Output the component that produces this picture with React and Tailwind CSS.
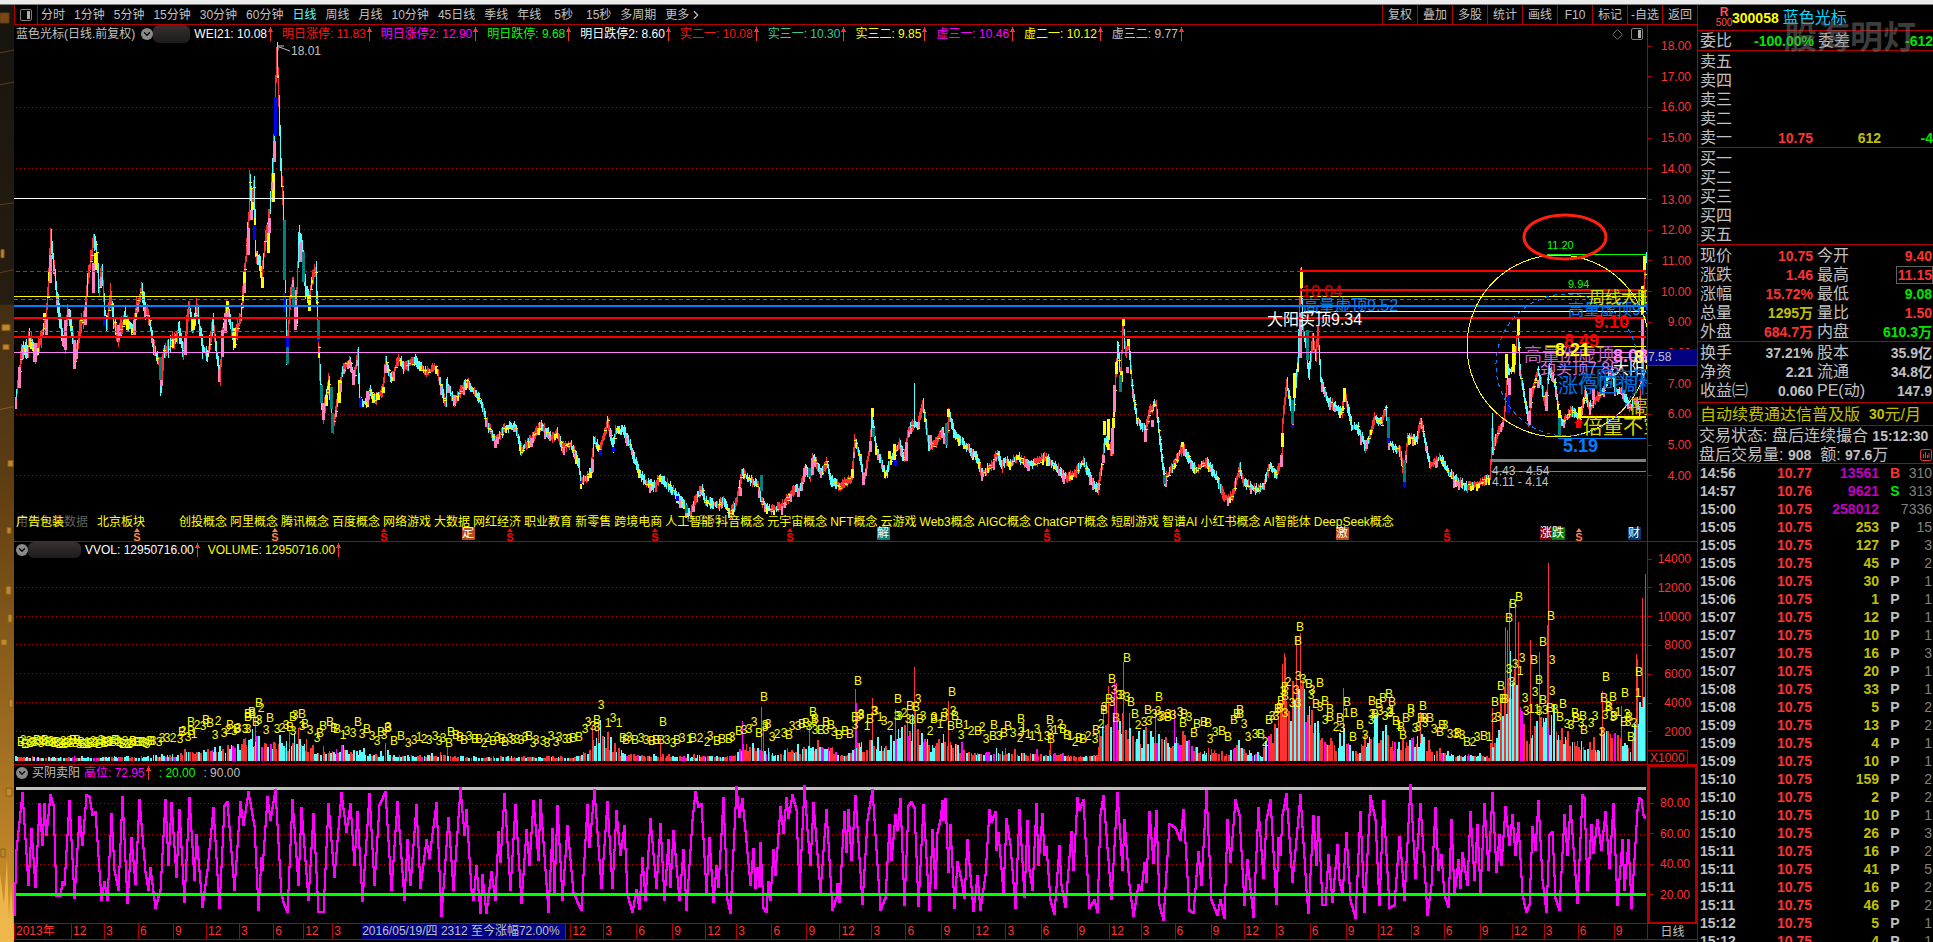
import React from 'react';
import { ChevronDown, ChevronRight, Diamond } from 'lucide-react';

const RED = '#ff3232';
const CYAN = '#54ffff';
const YELLOW = '#ffff00';
const PINK = '#ff80c0';
const TEAL = '#008080';
const NAVY = '#0000ff';

const periods = ['分时', '1分钟', '5分钟', '15分钟', '30分钟', '60分钟', '日线', '周线', '月线', '10分钟', '45日线', '季线', '年线', '5秒', '15秒', '多周期'];
const tools = ['复权', '叠加', '多股', '统计', '画线', 'F10', '标记', '-自选', '返回'];

const indicators = [
  ['WEI21: 10.08', 'text-white'],
  ['明日涨停: 11.83', 'text-[#ff1414]'],
  ['明日涨停2: 12.90', 'text-[#ff00ff]'],
  ['明日跌停: 9.68', 'text-[#00ff00]'],
  ['明日跌停2: 8.60', 'text-white'],
  ['实二一: 10.08', 'text-[#ff1414]'],
  ['实三一: 10.30', 'text-[#33cc99]'],
  ['实三二: 9.85', 'text-[#ffff00]'],
  ['虚三一: 10.46', 'text-[#ff00ff]'],
  ['虚二一: 10.12', 'text-[#ffff00]'],
  ['虚三二: 9.77', 'text-[#c0c0c0]'],
];

const concepts = '创投概念 阿里概念 腾讯概念 百度概念 网络游戏 大数据 网红经济 职业教育 新零售 跨境电商 人工智能 抖音概念 元宇宙概念 NFT概念 云游戏 Web3概念 AIGC概念 ChatGPT概念 短剧游戏 智谱AI 小红书概念 AI智能体 DeepSeek概念'.split(' ');

// month label + width of its slot on the time axis
const months = [
  ['2013年', 57], ['12', 33], ['3', 34], ['6', 35], ['9', 33], ['12', 33], ['3', 34], ['6', 30], ['12', 29], ['3', 30],
  ['cursor', 203], ['', 5], ['12', 33], ['3', 33], ['6', 36], ['9', 33], ['12', 31], ['3', 35], ['6', 35], ['9', 33],
  ['12', 32], ['3', 34], ['6', 36], ['9', 32], ['12', 32], ['3', 35], ['6', 36], ['9', 32], ['12', 32], ['3', 34],
  ['6', 36], ['9', 33], ['12', 32], ['3', 34], ['6', 36], ['9', 32], ['12', 33], ['3', 33], ['6', 36], ['9', 32],
  ['12', 32], ['3', 34], ['6', 36], ['9', 33],
];
const monthsTotal = months.reduce((sum, m) => sum + m[1], 0);

// price path, x then y
const price = [
  16,397,19,377,22,347,28,350,29,335,35,355,40,343,46,320,48,293,50,253,51,235,54,265,57,295,60,320,65,347,68,310,71,323,75,363,80,327,85,313,
  88,280,94,238,97,253,99,290,102,270,105,313,107,323,111,293,114,323,118,337,125,317,133,330,137,307,142,290,145,307,150,323,154,347,160,367,161,387,164,352,
  170,347,179,330,184,352,189,307,193,327,197,307,203,350,208,353,213,323,220,377,223,330,227,303,234,343,241,317,245,273,249,217,250,178,252,205,254,183,
  256,253,259,260,262,277,266,233,270,213,273,167,275,110,277,50,279,100,281,167,283,200,285,260,287,355,290,305,293,280,296,322,299,233,302,247,306,290,
  309,303,312,280,316,270,318,330,320,373,323,417,329,380,333,430,337,403,343,370,350,360,354,380,358,353,360,403,367,403,370,390,375,400,383,390,386,360,
  391,380,399,358,404,368,415,360,426,373,436,367,446,405,447,383,454,402,467,382,481,402,487,423,496,442,505,427,516,427,521,450,531,440,541,425,552,438,
  557,433,562,447,571,445,579,462,581,482,591,473,594,440,600,450,608,422,613,447,616,430,624,430,632,450,638,470,646,483,656,487,659,477,670,487,679,498,
  687,510,690,515,695,500,702,488,705,500,718,506,724,500,730,515,737,500,742,473,750,480,758,485,761,500,771,511,783,505,796,487,799,493,806,468,810,477,
  813,457,822,473,827,462,831,480,840,487,852,477,855,440,861,460,864,480,870,447,872,415,876,447,886,475,891,460,900,443,904,460,908,433,914,423,918,427,
  923,403,929,447,936,443,942,430,947,443,949,412,954,433,963,443,977,457,982,473,991,467,998,453,1002,467,1005,460,1011,463,1018,457,1026,463,1034,463,1046,457,
  1057,468,1067,478,1076,473,1083,462,1092,480,1098,490,1102,465,1105,440,1108,443,1112,453,1115,390,1118,347,1121,380,1123,323,1126,353,1129,343,1132,383,1137,420,
  1146,430,1150,410,1156,403,1160,440,1165,480,1175,463,1183,447,1195,470,1207,462,1218,480,1224,498,1232,497,1240,468,1243,482,1255,490,1264,485,1270,465,1277,475,
  1282,457,1283,420,1287,383,1293,420,1295,393,1298,363,1301,273,1303,327,1307,353,1309,377,1313,337,1316,357,1318,330,1321,380,1328,400,1342,413,1345,393,1352,427,
  1358,428,1366,448,1375,417,1382,423,1386,407,1389,443,1400,452,1404,473,1408,437,1417,440,1421,420,1430,465,1440,458,1453,478,1467,487,1480,483,1490,477,1492,450,
  1498,433,1504,420,1508,370,1514,370,1518,325,1520,370,1525,400,1529,423,1532,393,1538,370,1542,387,1546,407,1549,367,1555,383,1560,420,1563,423,1572,410,1580,420,
  1585,393,1590,407,1603,390,1612,370,1615,390,1623,393,1630,407,1637,400,1640,413,1642,353,1644,290,1646,257,
];

// wide candle bodies: x, top, bottom
const bodies = {
  [PINK]: [50,255,283,93,263,293,244,283,293,248,228,255,251,210,220,269,218,233,274,141,162,300,245,262,19,367,388,35,343,362,46,318,335,65,320,350,74,340,369,85,310,325,118,325,340,134,320,335,161,380,386,185,337,355,222,330,357,225,313,333,295,290,330,323,403,420,340,383,392,353,370,385,367,391,402,385,365,373,448,386,393,454,395,403,497,437,444,531,438,447,592,459,472,610,430,437,693,506,512,740,488,496,804,468,476,812,458,475,798,488,497,870,441,452,863,473,485,906,442,461,930,435,445,1026,459,467,1103,455,463,1112,428,454,1114,385,412,1127,367,373,1145,430,442,1152,420,427,1098,483,490,1300,313,358,1281,455,467,1404,463,470,1366,440,449,1509,378,395,1529,411,425,1530,388,408,1546,392,411,1538,380,388,1593,388,400,1642,319,360],
  [YELLOW]: [95,253,270,244,272,283,252,202,210,262,277,288,268,233,253,273,173,202,44,313,320,127,317,330,193,317,330,227,301,318,234,328,348,296,305,324,309,295,311,326,395,406,339,380,403,367,402,407,377,393,400,383,387,393,852,469,478,872,408,417,889,451,459,894,444,460,948,409,417,1017,455,460,1104,421,435,1108,419,440,1113,418,428,1116,362,374,1123,319,326,1121,371,382,1128,339,346,1182,442,447,1301,272,288,1294,373,398,1282,433,447,1344,388,402,1506,354,378,1513,344,372,1518,319,335,1559,410,418,1579,407,418,1642,286,315,1644,256,270],
  [TEAL]: [284,220,280,303,252,282,293,287,305,160,357,380,287,346,364,318,320,341,321,385,403,331,387,409,332,413,433,686,505,513,761,475,491,809,468,477,873,428,437,946,423,445,1120,375,392,1164,475,484,1307,330,360,1292,400,424,1388,417,438,1404,460,482,1492,428,441,1559,418,437],
  [NAVY]: [254,225,240,275,97,136,284,293,312,104,316,326,287,338,347,318,339,342,360,398,407,580,481,484,600,450,455,613,447,452,677,496,501,895,460,466,1292,425,428,1388,438,443,1404,482,487,1508,396,413],
};

// volume envelope: x, height
const volume = [
  14,4,150,4,180,8,190,12,215,16,240,20,248,34,252,28,258,32,265,23,290,23,300,26,310,14,330,12,340,14,360,12,372,6,385,10,400,6,440,7,460,4,575,4,592,18,598,40,605,28,612,18,620,9,650,5,735,6,
  742,22,750,16,765,12,775,8,790,16,800,14,810,24,820,16,830,22,836,8,850,10,858,26,864,16,872,30,880,16,895,26,905,32,914,45,922,32,932,18,945,34,955,22,965,12,980,8,1000,12,1020,9,1045,10,1080,6,1095,7,
  1103,48,1114,66,1124,60,1130,38,1140,24,1150,36,1170,28,1182,36,1190,20,1200,12,1228,7,1237,30,1245,10,1262,6,1268,40,1275,32,1283,90,1290,62,1298,100,1302,96,1308,66,1317,60,1325,34,1335,20,1344,30,1350,16,
  1360,12,1370,40,1385,42,1395,14,1412,28,1420,32,1430,15,1445,8,1488,6,1495,40,1506,110,1510,130,1520,84,1526,36,1540,52,1550,60,1560,30,1575,22,1590,24,1598,16,1606,52,1616,38,1630,12,1637,75,1641,70,1645,110,
];
const spikes = [
  255,45,289,30,298,33,447,15,385,18,592,35,598,40,660,24,742,40,761,54,763,38,809,38,855,72,856,58,872,63,895,52,907,55,914,94,915,52,948,60,1050,28,1103,54,1108,75,1114,82,1116,78,1123,99,1129,48,1155,52,1174,52,
  1282,97,1284,108,1285,104,1296,124,1300,128,1343,73,1420,49,1492,53,1505,134,1507,131,1509,160,1515,158,1518,139,1530,121,1539,109,1548,198,1547,136,1602,70,1621,55,1636,107,1637,102,1642,163,1645,187,
];

const marksB = [
  259,703,252,712,248,717,230,725,237,729,293,717,302,714,182,732,191,731,388,728,451,732,597,720,663,722,320,733,764,697,806,723,813,712,815,719,826,722,858,681,855,717,870,719,898,699,910,706,934,719,944,717,952,692,959,724,
  994,725,1021,719,1050,720,1112,679,1104,710,1116,718,1127,658,1135,714,1148,710,1159,697,1168,717,1184,714,1208,723,1096,730,1237,714,1240,714,1269,720,1278,709,1281,701,1285,687,1285,696,1298,641,1300,627,1320,683,1330,717,
  1340,718,1347,702,1354,713,1372,701,1379,704,1383,698,1389,694,1392,702,1401,727,1411,709,1423,706,1442,725,1458,733,1495,702,1501,686,1505,699,1509,618,1513,604,1519,597,1534,660,1539,680,1543,642,1551,616,1563,704,1575,713,
  1583,716,1604,698,1606,677,1613,697,1625,693,1629,717,1639,672,
];
const marks3 = [
  259,720,293,731,248,729,765,727,815,730,861,714,875,711,899,716,918,699,953,711,1021,732,1050,730,1112,702,1160,717,1298,676,1298,703,1311,695,1285,713,1325,720,1372,714,1390,713,1425,723,1522,658,1512,682,1535,692,1552,691,1539,711,1545,710,1526,711,
  1608,706,1613,717,1627,714,1552,660,
];

// oscillator turning points
const osc = [
  14,916,16,850,22,793,28,885,31,829,35,887,39,804,42,845,44,804,46,835,50,795,53,805,56,896,60,896,62,882,64,885,69,801,74,898,79,817,82,845,86,795,89,797,92,815,95,812,101,900,104,882,107,900,111,814,114,870,118,890,122,797,127,903,
  131,838,135,884,139,800,145,872,148,890,150,868,155,908,160,890,165,800,168,865,171,803,176,877,179,810,184,902,189,798,194,880,196,835,202,907,207,870,213,808,219,908,224,806,227,802,234,890,240,802,243,825,248,792,254,826,258,910,
  261,858,262,870,267,797,270,820,275,790,281,895,284,905,287,912,292,800,298,885,301,808,308,900,313,814,318,912,323,912,328,804,334,877,341,793,346,832,350,804,354,865,357,812,362,901,369,794,374,885,379,805,385,792,391,890,397,802,
  404,900,407,840,410,885,416,805,420,888,426,840,429,858,436,803,441,916,448,818,453,890,460,788,464,835,466,810,471,890,473,900,476,866,480,913,482,875,486,913,491,872,495,900,498,832,500,862,504,794,510,890,515,805,521,903,526,830,
  529,865,533,801,538,860,540,800,548,912,552,829,554,892,557,806,562,900,567,826,573,893,581,910,587,805,589,847,594,790,601,888,607,802,612,888,616,811,620,855,624,826,627,895,632,912,636,890,639,909,642,858,645,900,650,819,656,888,
  660,824,664,900,668,840,670,887,673,831,679,900,683,850,686,910,692,820,695,792,698,807,701,804,706,892,709,838,713,902,716,866,718,887,723,798,727,900,730,913,736,787,739,817,742,799,750,885,753,849,755,888,757,868,759,886,760,843,
  763,908,766,912,768,882,770,900,773,850,775,875,780,807,783,833,786,798,788,818,792,795,796,810,799,893,804,786,807,830,810,865,813,803,820,892,826,810,832,910,836,898,837,884,839,902,844,812,846,852,848,810,851,860,855,796,862,904,
  867,820,872,790,880,910,885,898,889,825,891,860,895,815,897,830,900,799,904,905,908,806,911,802,914,808,918,906,923,805,929,910,932,830,935,888,937,833,940,820,942,801,943,820,945,799,948,872,950,825,954,908,957,862,961,880,964,898,
  967,840,973,911,977,876,980,910,985,875,989,810,991,822,995,812,996,850,998,833,1003,893,1006,819,1010,845,1015,908,1019,810,1024,897,1027,821,1029,870,1032,890,1036,804,1038,865,1042,814,1044,855,1046,847,1050,900,1054,914,1059,846,
  1061,885,1065,907,1071,832,1073,870,1077,798,1079,810,1083,800,1087,875,1089,908,1094,900,1097,912,1100,815,1103,796,1111,899,1117,793,1122,870,1124,820,1129,885,1133,916,1138,885,1141,890,1144,863,1146,882,1149,812,1153,863,1156,811,
  1159,905,1163,920,1169,824,1175,828,1180,840,1183,810,1189,910,1193,913,1198,852,1201,885,1206,791,1211,900,1217,915,1220,900,1224,918,1227,820,1230,862,1235,800,1239,815,1244,905,1247,860,1253,917,1258,808,1263,878,1266,820,1270,800,
  1276,904,1278,838,1280,855,1282,815,1286,794,1292,882,1295,850,1300,795,1306,890,1308,913,1313,816,1316,865,1318,817,1322,905,1325,905,1328,855,1332,902,1337,845,1339,880,1342,895,1346,833,1350,900,1355,918,1360,812,1364,912,1370,796,
  1375,820,1379,905,1383,801,1389,908,1394,905,1399,837,1401,858,1404,900,1410,785,1415,878,1420,804,1427,915,1431,885,1435,808,1438,870,1441,855,1444,895,1448,907,1451,820,1454,895,1458,860,1460,888,1462,853,1467,885,1470,812,1474,880,
  1477,825,1480,893,1484,804,1488,870,1492,793,1496,872,1499,835,1501,865,1505,807,1509,845,1512,815,1515,855,1518,823,1522,895,1526,912,1529,905,1532,827,1535,850,1538,801,1542,880,1546,912,1549,835,1552,832,1555,898,1559,910,1564,815,
  1567,855,1570,806,1577,903,1582,795,1584,798,1587,890,1591,825,1593,853,1597,820,1601,850,1605,812,1609,868,1613,804,1617,905,1622,840,1624,890,1628,840,1631,908,1637,810,1639,798,1641,800,1643,815,1646,820,
];

const ticks = [
  ['14:56', '10.77', '13561', 'B', '310'], ['14:57', '10.76', '9621', 'S', '313'], ['15:00', '10.75', '258012', '', '7336'],
  ['15:05', '10.75', '253', 'P', '15'], ['15:05', '10.75', '127', 'P', '3'], ['15:05', '10.75', '45', 'P', '2'],
  ['15:06', '10.75', '30', 'P', '1'], ['15:06', '10.75', '1', 'P', '1'], ['15:07', '10.75', '12', 'P', '1'],
  ['15:07', '10.75', '10', 'P', '1'], ['15:07', '10.75', '16', 'P', '3'], ['15:07', '10.75', '20', 'P', '1'],
  ['15:08', '10.75', '33', 'P', '1'], ['15:08', '10.75', '5', 'P', '2'], ['15:09', '10.75', '13', 'P', '2'],
  ['15:09', '10.75', '4', 'P', '1'], ['15:09', '10.75', '10', 'P', '1'], ['15:10', '10.75', '159', 'P', '2'],
  ['15:10', '10.75', '2', 'P', '2'], ['15:10', '10.75', '10', 'P', '1'], ['15:10', '10.75', '26', 'P', '3'],
  ['15:11', '10.75', '16', 'P', '2'], ['15:11', '10.75', '41', 'P', '5'], ['15:11', '10.75', '16', 'P', '2'],
  ['15:11', '10.75', '46', 'P', '2'], ['15:12', '10.75', '5', 'P', '1'], ['15:12', '10.75', '4', 'P', '1'],
];

const R = 'text-[#ff3232]';
const G = 'text-[#00e600]';
const Y = 'text-[#c0c000]';
const W = 'text-[#c0c0c0]';
const quotes = [
  ['现价', '10.75', R, '今开', '9.40', R],
  ['涨跌', '1.46', R, '最高', '11.15', R, true],
  ['涨幅', '15.72%', R, '最低', '9.08', G],
  ['总量', '1295万', Y, '量比', '1.50', R],
  ['外盘', '684.7万', R, '内盘', '610.3万', G],
];
const basics = [
  ['换手', '37.21%', W, '股本', '35.9亿', W],
  ['净资', '2.21', W, '流通', '34.8亿', W],
  ['收益㈢', '0.060', W, 'PE(动)', '147.9', W],
];

function makeRandom(seed) {
  let s = seed;
  return () => {
    s = (s * 16807) % 2147483647;
    return s / 2147483647;
  };
}

function at(path, x) {
  let i = 0;
  while (i < path.length - 4 && path[i + 2] < x) i += 2;
  const t = (x - path[i]) / (path[i + 2] - path[i] || 1);
  return path[i + 1] + (path[i + 3] - path[i + 1]) * Math.min(1, Math.max(0, t));
}

function pairs(list) {
  const out = [];
  for (let i = 0; i < list.length; i += 2) out.push([list[i], list[i + 1]]);
  return out;
}

function buildCandles() {
  const rnd = makeRandom(77);
  const d = { [RED]: '', [CYAN]: '', [YELLOW]: '', [PINK]: '' };
  for (let x = 16; x < 1647; x++) {
    const a = at(price, x);
    const b = at(price, x + 1);
    const amp = x < 330 ? 9 : 5;
    const top = Math.round(Math.min(a, b) - rnd() * amp - 1);
    const bottom = Math.round(Math.max(a, b) + rnd() * amp + 1);
    const up = rnd() < 0.2 ? b > a : b < a;
    d[up ? RED : CYAN] += `M${x} ${top}h1V${bottom}h-1z`;
    if (rnd() < 0.3) d[YELLOW] += `M${x - 1} ${Math.round(a + (rnd() - 0.5) * amp)}h3v1h-3z`;
    if (rnd() < 0.08) d[PINK] += `M${x - 1} ${Math.round(a)}h2v${4 + Math.round(rnd() * amp)}h-2z`;
    if (rnd() < 0.06) d[YELLOW] += `M${x - 1} ${Math.round(a)}h2v${3 + Math.round(rnd() * 5)}h-2z`;
  }
  Object.keys(bodies).forEach((color) => {
    const list = bodies[color];
    d[color] = d[color] || '';
    for (let i = 0; i < list.length; i += 3) d[color] += `M${list[i] - 1} ${list[i + 1]}h3V${list[i + 2]}h-3z`;
  });
  return d;
}

function buildVolume() {
  const rnd = makeRandom(4242);
  const d = { [RED]: '', '#ff00ff': '', [CYAN]: '' };
  let x = 15;
  while (x < 1645) {
    const h = Math.round(at(volume, x) * (rnd() < 0.12 ? 1.1 : 0.4 + rnd() * 0.45)) + 1;
    const k = rnd();
    const color = k < 0.44 ? RED : k < 0.52 ? '#ff00ff' : CYAN;
    const w = rnd() < 0.65 ? 2 : 1;
    d[color] += `M${x} ${761 - h}h${w}V761h-${w}z`;
    x += w + (rnd() < 0.2 ? 1 : 0);
  }
  pairs(spikes).forEach(([sx, h], i) => {
    d[i % 5 === 3 && h < 100 ? '#ff00ff' : RED] += `M${sx} ${761 - h}h1V761h-1z`;
  });
  return d;
}

function buildMarks() {
  const rnd = makeRandom(909);
  const out = [];
  let x = 18;
  while (x < 1640) {
    const k = rnd();
    const h = at(volume, x);
    const lift = x < 150 ? 4 : h > 7 ? 18 : 9;
    const y = 761 - Math.min(h * 0.65, 80) - 14 - Math.round(rnd() * lift);
    out.push([x + 3, Math.round(y), k < 0.34 ? 'B' : k < 0.8 ? '3' : k < 0.9 ? '2' : '1']);
    x += x < 150 ? 2 : 3 + Math.round(rnd() * 4);
  }
  pairs(marksB).forEach(([mx, y]) => out.push([mx, y, 'B']));
  pairs(marks3).forEach(([mx, y]) => out.push([mx, y, '3']));
  return out;
}

// one step per pixel column keeps the staircase look of the line
function buildOsc() {
  let d = `M15 ${osc[1]}`;
  for (let x = 15; x < 1646; x++) d += `V${Math.round(at(osc, x))}H${x + 1}`;
  return d;
}

const candles = buildCandles();
const bars = buildVolume();
const marks = buildMarks();
const oscPath = buildOsc();

function Grid({ rows }) {
  return rows.map((y) => <line key={y} x1="16" x2="1646" y1={y} y2={y} stroke="#b00000" strokeDasharray="1 3" />);
}

function UpArrow() {
  return (
    <svg className="ml-px h-[14px] w-[5px] shrink-0" viewBox="0 0 5 14" fill={RED} aria-hidden="true">
      <path d="M2 0h1v2h1v2h1v1H3v9H2V5H0V4h1V2h1z" shapeRendering="crispEdges" />
    </svg>
  );
}

function FoldButton({ label }) {
  return (
    <button aria-label={label} className="flex h-3 w-3 shrink-0 items-center justify-center rounded-full bg-[#8a8a8a] text-black">
      <ChevronDown size={10} strokeWidth={3} />
    </button>
  );
}

function PanelIcon() {
  return (
    <svg className="h-3 w-3" viewBox="0 0 12 12" aria-hidden="true">
      <rect x="0.5" y="0.5" width="11" height="11" rx="1.5" fill="none" stroke="#808080" />
      <rect x="7" y="2" width="3" height="8" fill="#b0b0b0" />
    </svg>
  );
}

function Toolbar() {
  return (
    <nav className="flex h-5 items-stretch border-b border-[#b40000] text-[#c0c0c0]">
      <button aria-label="侧栏" className="flex w-6 items-center justify-center border-r border-l border-[#b40000]">
        <PanelIcon />
      </button>
      <div className="ml-[3px] flex items-center gap-[9px]">
        {periods.map((p) => (
          <button key={p} className={p === '日线' ? 'text-[#54ffff]' : p === '5秒' || p === '15秒' ? 'pl-1' : ''}>{p}</button>
        ))}
        <button className="flex items-center">更多<ChevronRight size={14} /></button>
      </div>
      <div className="ml-auto flex">
        {tools.map((t) => (
          <button key={t} className="w-[35px] border-l border-[#b40000] text-center">{t}</button>
        ))}
      </div>
    </nav>
  );
}

function Label({ x, y, size = 16, fill, bold, children }) {
  return (
    <text x={x} y={y} fontSize={size} fill={fill} fontWeight={bold ? 700 : 400} dominantBaseline="central">{children}</text>
  );
}

function Dividend({ x, color }) {
  return (
    <g fill={color}>
      <path d={`M${x - 3} 532l3 -4l3 4z`} />
      <text x={x} y="537" fontSize="11" fontWeight="700" textAnchor="middle" dominantBaseline="central">S</text>
    </g>
  );
}

function Badge({ x, bg, children }) {
  return (
    <g>
      <rect x={x} y="527" width="13" height="13" fill={bg} />
      <text x={x + 6} y="533" fontSize="12" fill="#fff" textAnchor="middle" dominantBaseline="central">{children}</text>
    </g>
  );
}

function PriceChart() {
  return (
    <section className="relative flex h-[517px] flex-col justify-between overflow-hidden border-b border-[#b40000]">
      <svg className="absolute inset-0 h-full w-full" viewBox="14 25 1633 516" preserveAspectRatio="none" aria-label="K线图">
        <g shapeRendering="crispEdges">
          <Grid rows={[107.5, 168.5, 229.5, 291.5, 414.5, 475.5]} />
          {Object.keys(candles).map((c) => <path key={c} d={candles[c]} fill={c} />)}
          <path d="M914.5 383v40M1492.5 413v40" stroke={CYAN} />
          <path d="M14 198.5H1646" stroke="#fff" />
          <path d="M16 271.5H1300" stroke="#c800c8" strokeDasharray="4 3" />
          <path d="M14 296.5H1646" stroke="#ffff00" />
          <path d="M14 299.5H1646M14 331.5H1646" stroke="#0080ff" strokeDasharray="4 3" />
          <path d="M14 306H1646" stroke="#0080ff" strokeWidth="2" />
          <path d="M14 318H1646M14 337H1646M1300 271H1646M1300 290H1646" stroke="#f00" strokeWidth="2" />
          <path d="M14 352.5H1646M1600 357.5H1646" stroke="#ff80ff" />
          <path d="M1304 311.5H1646" stroke="#fff" />
          <path d="M1547 254.5H1646M1568 293.5H1646" stroke="#0f0" />
          <path d="M1546 346.5H1646" stroke="#ff0" />
          <path d="M1580 417H1646" stroke="#ff0" strokeWidth="2" />
          <path d="M1557 366.5H1612M1558 438.5H1646" stroke="#0080ff" />
          <path d="M1491 460.5H1646" stroke="#808080" strokeWidth="3" />
          <path d="M1491 471.5H1646" stroke="#808080" />
          <circle cx="1558" cy="346" r="91" fill="none" stroke="#ff0" />
          <circle cx="1567" cy="365" r="71" fill="none" stroke="#0080ff" strokeDasharray="4 4" />
        </g>
        <ellipse cx="1565" cy="237" rx="41" ry="22" fill="none" stroke="#ff2010" strokeWidth="3" />
        <path d="M1579 418l4 5h-2v5h-5v-5h-2z" fill="#f00" />
        <path d="M278 46h6M278 46v5M279 47l11 4" stroke="#c0c0c0" fill="none" />
        <Label x={291} y={51} size={12} fill="#c0c0c0">18.01</Label>
        <Label x={1547} y={245} size={11} fill="#0f0">11.20</Label>
        <Label x={1568} y={284} size={11} fill="#0f0">9.94</Label>
        <Label x={1302} y={291} fill="#e00000">10.04</Label>
        <Label x={1303} y={305} fill="#0080ff">高量虚顶9.52</Label>
        <Label x={1267} y={319} fill="#fff">大阳买顶9.34</Label>
        <Label x={1568} y={309} fill="#0080ff">高量虚顶9.52</Label>
        <Label x={1589} y={297} fill="#e0e000">周线大阳</Label>
        <Label x={1524} y={355} size={18} fill="#c860c8">高量阴虚顶</Label>
        <Label x={1540} y={368} fill="#d070e0">颈买顶7.85</Label>
        <Label x={1613} y={368} fill="#fff">大阳</Label>
        <Label x={1578} y={378} size={18} fill="#0060c0">大阳实顶</Label>
        <Label x={1558} y={386} size={20} fill="#0070e0">涨停回调柱</Label>
        <Label x={1594} y={322} size={18} fill="#f00" bold>9.10</Label>
        <Label x={1564} y={341} size={18} fill="#f00" bold>8.49</Label>
        <Label x={1555} y={350} size={18} fill="#ff0" bold>8.21</Label>
        <Label x={1613} y={356} size={18} fill="#ff80ff" bold>8.08</Label>
        <Label x={1634} y={357} size={18} fill="#ffff60" bold>8.2</Label>
        <Label x={1630} y={407} size={20} fill="#c0c000">高量</Label>
        <Label x={1583} y={427} size={20} fill="#d8d800">倍量不穿</Label>
        <Label x={1563} y={446} size={18} fill="#0080ff" bold>5.19</Label>
        <Label x={1492} y={471} size={12} fill="#c0c0c0">4.43 - 4.54</Label>
        <Label x={1492} y={482} size={12} fill="#c0c0c0">4.11 - 4.14</Label>
        <Label x={698} y={520} size={12} fill="#909090">2.55</Label>
        <path d="M688 517v4h9" stroke="#909090" fill="none" />
        {[137, 275, 1579].map((x) => <Dividend key={x} x={x} color="#ff8040" />)}
        {[384, 510, 655, 790, 1047, 1177, 1447].map((x) => <Dividend key={x} x={x} color="#ff0000" />)}
        <Badge x={462} bg="#b84a14">定</Badge>
        <Badge x={877} bg="#008080">解</Badge>
        <Badge x={1336} bg="#b84a14">激</Badge>
        <Badge x={1540} bg="#800000">涨</Badge>
        <Badge x={1552} bg="#008000">跌</Badge>
        <Badge x={1628} bg="#003870">财</Badge>
      </svg>
      <header className="relative flex h-[18px] items-center pl-[2px] text-[#c0c0c0]">
        <h1>蓝色光标(日线.前复权)</h1>
        <span className="ml-[6px] flex"><FoldButton label="主图指标" /></span>
        <span className="mr-1 h-[18px] w-[37px] rounded-md bg-linear-to-b from-[#3a2e2e] to-[#1c1c1c]" />
        <div className="flex gap-[9px]">
          {indicators.map(([text, color]) => (
            <span key={text} className="flex items-center whitespace-pre">
              <span className={color}>{text}</span>
              <UpArrow />
            </span>
          ))}
        </div>
        <div className="mr-1 ml-auto flex items-center gap-2 text-[#808080]">
          <Diamond size={11} />
          <PanelIcon />
        </div>
      </header>
      <footer className="relative mb-3 flex h-[14px] items-center text-[#ffff00]">
        <span className="relative w-[83px] pl-[2px]">
          <span className="text-[#606060]">用到未来数据</span>
          <span className="absolute top-0 left-[2px]">广告包装</span>
        </span>
        <span className="w-[82px]">北京板块</span>
        <span className="flex gap-[3px] whitespace-nowrap">
          {concepts.map((c) => <span key={c}>{c}</span>)}
        </span>
      </footer>
    </section>
  );
}

function VolumeChart() {
  return (
    <section className="relative h-[223px] overflow-hidden border-b border-[#b40000]">
      <svg className="absolute inset-0 h-full w-full" viewBox="14 542 1633 222" preserveAspectRatio="none" aria-label="成交量">
        <g shapeRendering="crispEdges">
          <Grid rows={[587.5, 616.5, 644.5, 673.5, 702.5, 731.5]} />
          {Object.keys(bars).map((c) => <path key={c} d={bars[c]} fill={c} />)}
        </g>
        {marks.map(([x, y, t], i) => (
          <text key={i} x={x} y={y} fontSize="12" fill="#ffff00" textAnchor="middle" dominantBaseline="central">{t}</text>
        ))}
      </svg>
      <header className="relative flex h-4 items-center pl-[2px]">
        <FoldButton label="成交量指标" />
        <span className="mr-1 h-4 w-[53px] rounded-md bg-linear-to-b from-[#3a3030] to-[#1c1c1c]" />
        <span className="text-white">VVOL: 12950716.00</span>
        <UpArrow />
        <span className="ml-2 text-[#ffff00]">VOLUME: 12950716.00</span>
        <UpArrow />
      </header>
    </section>
  );
}

function OscChart() {
  return (
    <section className="relative h-[159px] overflow-hidden border-b border-[#b40000]">
      <svg className="absolute inset-0 h-full w-full" viewBox="14 765 1633 158" preserveAspectRatio="none" aria-label="买阴卖阳">
        <g shapeRendering="crispEdges" fill="none">
          <Grid rows={[803.5, 834.5, 864.5]} />
          <path d="M16 788.5H1646" stroke="#c0c0c0" strokeWidth="3" />
          <path d={oscPath} stroke="#ff00ff" strokeWidth="2" />
          <path d="M16 894.5H1646" stroke="#00ff00" strokeWidth="3" />
        </g>
      </svg>
      <header className="relative flex h-4 items-center pl-[2px] text-[#c0c0c0]">
        <FoldButton label="副图指标" />
        <span className="ml-1">买阴卖阳</span>
        <span className="ml-1 text-[#ff00ff]">高位: 72.95</span>
        <UpArrow />
        <span className="ml-2 text-[#00ff00]">: 20.00</span>
        <span className="ml-2">: 90.00</span>
      </header>
    </section>
  );
}

function TimeAxis() {
  return (
    <div className="flex h-4 border-b border-[#b40000] text-[#ff3232]">
      {months.map(([m, w], i) => (
        <span
          key={i}
          className={m === 'cursor' ? 'shrink-0 bg-[#000080] whitespace-nowrap text-[#c0c0c0]' : 'shrink-0 border-l border-[#b40000] pl-px whitespace-nowrap'}
          style={{ width: `${(w / monthsTotal) * 100}%` }}
        >
          {m === 'cursor' ? '2016/05/19/四 2312 至今涨幅72.00%' : m}
        </span>
      ))}
    </div>
  );
}

function Scale({ values, className }) {
  return (
    <div className={`flex flex-col justify-between ${className}`}>
      {values.map((v) => (
        <div key={v} className="flex h-[14px] items-center justify-between pr-[6px]">
          <span className="h-px w-1 bg-[#b40000]" />
          <span>{v}</span>
        </div>
      ))}
    </div>
  );
}

function Axis() {
  return (
    <aside className="flex w-[50px] shrink-0 flex-col border-l border-[#b40000] text-[#ff3232]">
      <div className="relative h-[517px] border-b border-[#b40000]">
        <Scale className="h-[458px] pt-[14px]" values={['18.00', '17.00', '16.00', '15.00', '14.00', '13.00', '12.00', '11.00', '10.00', '9.00', '8.00', '7.00', '6.00', '5.00', '4.00']} />
        <span className="absolute top-[324px] left-0 flex h-[17px] w-full items-center border-b border-[#b40000] bg-[#000080] text-[#c0c0c0]">7.58</span>
      </div>
      <div className="flex h-[223px] flex-col justify-between border-b border-[#b40000]">
        <Scale className="h-[197px] pt-[10px]" values={['14000', '12000', '10000', '8000', '6000', '4000', '2000']} />
        <span className="flex h-[14px] w-10 items-center border-t border-r border-[#b40000] pl-[2px]">X1000</span>
      </div>
      <div className="h-[159px] border-2 border-[#b40000]">
        <Scale className="-mr-px h-[135px] pt-[29px]" values={['80.00', '60.00', '40.00', '20.00']} />
      </div>
      <div className="flex h-4 items-center justify-center border-b border-[#b40000] text-[#c0c0c0]">日线</div>
    </aside>
  );
}

function QuoteRow({ row }) {
  const [l1, v1, c1, l2, v2, c2, boxed] = row;
  return (
    <div className="flex h-[19px] items-center whitespace-nowrap">
      <span className="w-12">{l1}</span>
      <b className={`w-[65px] text-right text-sm ${c1}`}>{v1}</b>
      <span className="ml-1 w-12">{l2}</span>
      <b className={`ml-auto text-sm leading-4 ${c2} ${boxed ? 'border border-[#606060] pl-px' : 'pr-px'}`}>{v2}</b>
    </div>
  );
}

function Depth({ side }) {
  const levels = side === '卖' ? ['五', '四', '三', '二', '一'] : ['一', '二', '三', '四', '五'];
  return (
    <div className="h-[97px] border-b border-[#b40000] pt-px pl-[2px]">
      {levels.map((n) => (
        <div key={n} className="flex h-[19px] items-center">
          <span className="w-12">{side}{n}</span>
          {side === '卖' && n === '一' && (
            <>
              <b className="w-[65px] text-right text-sm text-[#ff3232]">10.75</b>
              <b className="w-[68px] text-right text-sm text-[#c0c000]">612</b>
              <b className="ml-auto text-sm text-[#00e600]">-4</b>
            </>
          )}
        </div>
      ))}
    </div>
  );
}

function QuotePanel() {
  return (
    <aside className="relative w-[236px] shrink-0 overflow-hidden border-l border-[#b40000] text-base leading-[19px] text-[#c0c0c0]">
      <header className="flex h-[26px] items-center border-b border-[#b40000] pl-[18px]">
        <span className="flex w-4 flex-col items-center text-[#ff5050]">
          <b className="text-xs leading-[11px]">R</b>
          <span className="text-[10px] leading-[10px]">500</span>
        </span>
        <b className="text-sm text-[#ffff00]">300058</b>
        <span className="ml-1 text-[#00d8ff]">蓝色光标</span>
      </header>
      <span className="absolute top-[13px] left-[86px] text-[33px] leading-10 font-bold text-[#787878]/50">股海明灯</span>
      <div className="flex h-5 items-center border-b border-[#b40000] pl-[2px]">
        <span className="w-12">委比</span>
        <b className="w-[66px] text-right text-sm text-[#00e600]">-100.00%</b>
        <span className="ml-1">委差</span>
        <b className="ml-auto text-sm text-[#00e600]">-612</b>
      </div>
      <Depth side="卖" />
      <Depth side="买" />
      <div className="h-[97px] border-b border-[#b40000] pt-px pl-[2px]">
        {quotes.map((q) => <QuoteRow key={q[0]} row={q} />)}
      </div>
      <div className="h-[61px] border-b border-[#b40000] pt-px pl-[2px]">
        {basics.map((q) => <QuoteRow key={q[0]} row={q} />)}
      </div>
      <a href="#renew" className="flex h-[23px] items-center border-b border-[#b40000] pl-[2px] whitespace-pre text-[#c0c000]">
        自动续费通达信普及版  <b className="text-sm">30</b>元/月
      </a>
      <div className="h-[38px] border-b border-[#b40000] pl-px whitespace-pre">
        <p className="flex h-[19px] items-center">交易状态: 盘后连续撮合 <b className="text-sm">15:12:30</b></p>
        <p className="flex h-[19px] items-center">
          盘后交易量: <b className="text-sm">908</b>  额: <b className="text-sm">97.6</b>万
          <svg className="mr-px ml-auto h-3 w-3" viewBox="0 0 12 12" fill="none" stroke={RED} aria-hidden="true">
            <rect x="0.5" y="0.5" width="11" height="11" rx="2" />
            <path d="M3.5 5v4M5.5 3v6M7.5 6v3M9 4v5" />
          </svg>
        </p>
      </div>
      <table className="w-full table-fixed text-sm leading-[18px] font-bold">
        <colgroup>
          <col className="w-[48px]" />
          <col className="w-[66px]" />
          <col className="w-[67px]" />
          <col className="w-[32px]" />
          <col />
        </colgroup>
        <tbody>
          {ticks.map(([time, p, vol, flag, n], i) => (
            <tr key={i} className="h-[18px]">
              <td className="pl-[2px]">{time}</td>
              <td className="text-right text-[#ff3232]">{p}</td>
              <td className={i < 3 ? 'text-right text-[#c000c0]' : 'text-right text-[#c0c000]'}>{vol}</td>
              <td className={flag === 'B' ? 'text-center text-[#ff3232]' : flag === 'S' ? 'text-center text-[#00e600]' : 'text-center'}>{flag}</td>
              <td className="pr-px text-right font-normal text-[#808080]"><span className="float-right">{n}</span></td>
            </tr>
          ))}
        </tbody>
      </table>
    </aside>
  );
}

// strip of the wallpaper left of the window
function Wallpaper() {
  return (
    <div className="w-[14px] shrink-0 bg-linear-to-b from-[#1c1812] via-[#5c3c12] to-[#d8962c]">
      <svg className="h-full w-full" viewBox="0 0 14 938" preserveAspectRatio="none" aria-hidden="true">
        <rect width="14" height="300" fill="#14120e" opacity="0.6" />
        <path d="M0 8h9v10H0zM0 48l14-3M0 80l14-3M0 200l14-2M0 268l14-3" fill="#7a4818" stroke="#5c3c1c" />
        <path d="M1 245h3v8H1zM2 320h8v6H2zM3 340h6v5H3zM0 405l14-3M8 456h5v6H8zM7 523h4v6H7zM6 582h5v8H6zM8 610h4v8H8zM1 635h6v6H1zM0 650h8M9 695h4v8H9zM6 784h6v8H6zM1 845h4v8H1z" fill="#c08828" stroke="#8a5c1c" />
        <path d="M0 870l4 30 3-45 2 60 2-35 3 50v8H0z" fill="#ffd060" opacity="0.6" />
      </svg>
    </div>
  );
}

export default function App() {
  return (
    <div
      className="flex h-screen flex-col overflow-hidden bg-black text-xs leading-[14px]"
      style={{ fontFamily: '"Liberation Sans", "Noto Sans CJK SC", sans-serif' }}
    >
      <div className="h-[5px] shrink-0 border-b border-[#808080] bg-[#ebebeb]" />
      <main className="flex min-h-0 flex-1">
        <Wallpaper />
        <div className="min-w-0 flex-1">
          <Toolbar />
          <div className="flex">
            <div className="min-w-0 flex-1">
              <PriceChart />
              <VolumeChart />
              <OscChart />
              <TimeAxis />
            </div>
            <Axis />
          </div>
        </div>
        <QuotePanel />
      </main>
    </div>
  );
}
